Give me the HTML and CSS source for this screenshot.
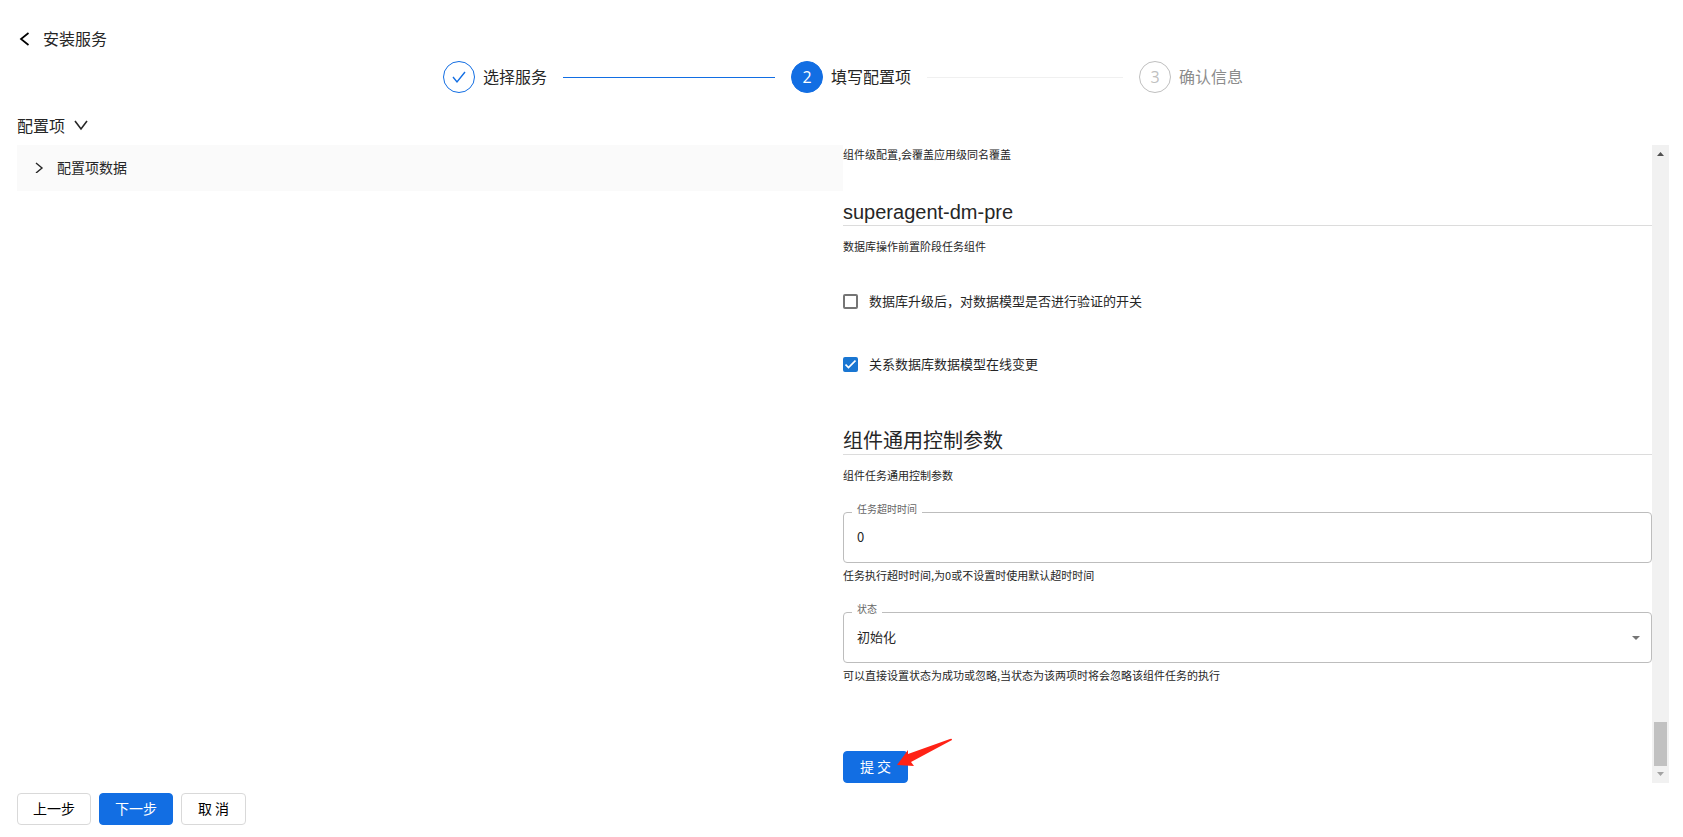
FILE: index.html
```html
<!DOCTYPE html>
<html lang="zh-CN">
<head>
<meta charset="utf-8">
<title>安装服务</title>
<meta name="viewport" content="width=device-width, initial-scale=1.0">
<link rel="stylesheet" href="styles.css">
</head>
<body>
<header class="page-header">
    <a href="#" class="back" aria-label="返回">
        <svg width="12" height="16" viewBox="0 0 12 16"><path d="M9.500 2L2 8l7.500 6"/></svg>
    </a>
    <h1>安装服务</h1>
</header>

<ol class="steps">
    <li class="step done">
        <span class="step-icon">
            <svg width="16" height="16" viewBox="0 0 16 16"><path d="M2 8l4 5 8-10"/></svg>
        </span>
        <span class="step-title">选择服务</span>
        <span class="step-line"></span>
    </li>
    <li class="step active">
        <span class="step-icon">2</span>
        <span class="step-title">填写配置项</span>
        <span class="step-line"></span>
    </li>
    <li class="step wait">
        <span class="step-icon">3</span>
        <span class="step-title">确认信息</span>
    </li>
</ol>

<button type="button" class="config-toggle">
    配置项
    <svg width="16" height="16" viewBox="0 0 16 16"><path d="M2 4l6 8 6-8"/></svg>
</button>

<main class="content">
    <section class="tree">
        <button type="button" class="tree-header">
            <svg width="10" height="12" viewBox="0 0 10 12"><path d="M1 2l6 5-6 5"/></svg>
            配置项数据
        </button>
    </section>

    <form class="config-form" action="#">
        <p>组件级配置,会覆盖应用级同名覆盖</p>

        <h2 class="name">superagent-dm-pre</h2>
        <p>数据库操作前置阶段任务组件</p>
        <div class="checks">
            <label><input type="checkbox">数据库升级后，对数据模型是否进行验证的开关</label>
            <label><input type="checkbox" checked>关系数据库数据模型在线变更</label>
        </div>

        <h2 class="params">组件通用控制参数</h2>
        <p>组件任务通用控制参数</p>
        <div class="field">
            <label for="timeout">任务超时时间</label>
            <input type="text" id="timeout" value="0">
        </div>
        <p class="help">任务执行超时时间,为0或不设置时使用默认超时时间</p>
        <div class="field">
            <label for="status">状态</label>
            <select id="status">
                <option selected>初始化</option>
                <option>成功</option>
                <option>忽略</option>
            </select>
            <svg class="caret" width="10" height="5" viewBox="0 0 10 5"><path d="M1 0h8L5 4z"/></svg>
        </div>
        <p class="help">可以直接设置状态为成功或忽略,当状态为该两项时将会忽略该组件任务的执行</p>

        <div class="submit">
            <button type="submit" class="btn primary">提 交</button>
            <svg class="pointer" width="56" height="30" viewBox="0 0 56 30"><path d="M0 27L11 12v4L53 1q2-1 2 1L14 24l3 4z"/></svg>
        </div>
    </form>

    <div class="scrollbar">
        <svg width="17" height="17" viewBox="0 0 17 17"><path fill="#505050" d="M5 11h7L8.500 7z"/></svg>
        <div class="thumb"></div>
        <svg width="17" height="17" viewBox="0 0 17 17"><path fill="#a3a3a3" d="M5 6h7L8.500 10z"/></svg>
    </div>
</main>

<footer class="actions">
    <button type="button" class="btn">上一步</button>
    <button type="button" class="btn primary">下一步</button>
    <button type="button" class="btn">取 消</button>
</footer>
</body>
</html>
```
FILE: styles.css
```css
* {
    margin: 0;
    padding: 0;
    box-sizing: border-box;
}

body {
    display: flex;
    flex-direction: column;
    min-height: 100vh;
    padding: 24px 14px 12px 17px;
    background: #fff;
    color: #262626;
    font-family: "Noto Sans CJK SC", sans-serif;
    font-size: 14px;
}

button,
input,
select {
    font-family: inherit;
    color: inherit;
}

button {
    cursor: pointer;
}

svg {
    flex: none;
    fill: none;
    stroke: currentColor;
}

.page-header {
    display: flex;
    align-items: center;
    gap: 12px;
    padding-left: 2px;
}

.page-header h1 {
    padding-bottom: 2px;
    font-size: 16px;
    font-weight: 400;
    line-height: 28px;
}

.back {
    display: flex;
    color: #000;
}

.back svg {
    stroke-width: 1.7;
}

/* steps */
.steps {
    display: flex;
    width: 100%;
    max-width: 800px;
    margin: 7px auto 0;
    list-style: none;
}

.step {
    display: flex;
    align-items: center;
    font-size: 16px;
    line-height: 30px;
}

.step:not(:last-child) {
    flex: 1;
}

.step-icon {
    display: flex;
    align-items: center;
    justify-content: center;
    width: 32px;
    height: 32px;
    margin-right: 8px;
    border: 1px solid #126ee3;
    border-radius: 50%;
    color: #126ee3;
    font-family: "Open Sans", sans-serif;
}

.step-icon svg {
    stroke-width: 1.4;
}

.step-title {
    padding-bottom: 2px;
}

.step-line {
    flex: 1;
    height: 1px;
    margin: 0 16px;
    background: #f0f0f0;
}

.done .step-line {
    background: #126ee3;
}

.active .step-icon {
    background: #126ee3;
    color: #fff;
}

.wait {
    color: #8c8c8c;
}

.wait .step-icon {
    border-color: #bfbfbf;
    color: #bfbfbf;
}

.config-toggle {
    display: flex;
    align-items: center;
    align-self: flex-start;
    gap: 8px;
    margin: 20px 0 8px;
    border: none;
    background: none;
    font-size: 16px;
    line-height: 24px;
}

.config-toggle svg {
    stroke-width: 1.6;
}

/* content */
.content {
    display: flex;
    flex: 1;
}

.tree {
    width: 50%;
}

.tree-header {
    display: flex;
    align-items: center;
    gap: 12px;
    width: 100%;
    padding: 11px 18px 13px;
    border: none;
    background: #fafafa;
    font-size: 14px;
    line-height: 22px;
    text-align: left;
}

.tree-header svg {
    stroke-width: 1.4;
}

.config-form {
    flex: 1;
}

.config-form p {
    padding-bottom: 2px;
    font-size: 11px;
    line-height: 18px;
}

.config-form h2 {
    margin-bottom: 11px;
    border-bottom: 1px solid #dcdcdc;
    font-family: "Liberation Sans", "Noto Sans CJK SC", sans-serif;
    font-size: 20px;
    font-weight: 400;
    line-height: 26px;
}

.config-form .name,
.config-form .params {
    padding-top: 3px;
}

.config-form .name {
    margin-top: 31px;
}

.config-form .params {
    margin-top: 49px;
}

.checks {
    display: flex;
    flex-direction: column;
    gap: 39px;
    margin-top: 32px;
}

.checks label {
    display: flex;
    align-items: center;
    gap: 11px;
    font-size: 13px;
    line-height: 24px;
}

.checks input {
    appearance: none;
    width: 15px;
    height: 15px;
    border: 2px solid #757575;
    border-radius: 2px;
}

.checks input:checked {
    border-color: #1976d2;
    background: #1976d2 url("data:image/svg+xml,%3Csvg xmlns='http://www.w3.org/2000/svg' viewBox='0 0 11 11'%3E%3Cpath d='M0.500 5.500l3 3 7-7' fill='none' stroke='%23fff' stroke-width='1.700'/%3E%3C/svg%3E") center / 11px no-repeat;
}

.field {
    position: relative;
    height: 51px;
    margin-top: 26px;
    border: 1px solid #bdbdbd;
    border-radius: 4px;
}

.field label {
    position: absolute;
    top: -11px;
    left: 8px;
    padding: 0 5px;
    background: #fff;
    color: #666;
    font-size: 10px;
    line-height: 14px;
}

.field input,
.field select {
    display: block;
    appearance: none;
    width: 100%;
    height: 100%;
    padding: 0 13px 2px;
    border: none;
    outline: none;
    background: none;
    font-size: 13px;
}

.caret {
    position: absolute;
    top: 23px;
    right: 10px;
    fill: #757575;
    stroke: none;
    pointer-events: none;
}

.config-form .help {
    margin-top: 3px;
}

.submit {
    position: relative;
    margin-top: 65px;
}

.pointer {
    position: absolute;
    top: -13px;
    left: 54px;
    fill: #ff2216;
    stroke: none;
    pointer-events: none;
}

.scrollbar {
    display: flex;
    flex-direction: column;
    width: 17px;
    background: #f1f1f1;
}

.scrollbar svg {
    stroke: none;
}

.thumb {
    height: 44px;
    margin: auto 2px 0;
    background: #c1c1c1;
}

/* buttons */
.btn {
    min-width: 65px;
    height: 32px;
    padding: 0 15px 2px;
    border: 1px solid #d9d9d9;
    border-radius: 4px;
    background: #fff;
    color: #000;
    font-size: 14px;
}

.btn.primary {
    border-color: #126ee3;
    background: #126ee3;
    color: #fff;
}

.actions {
    display: flex;
    gap: 8px;
    margin-top: 10px;
}
```
